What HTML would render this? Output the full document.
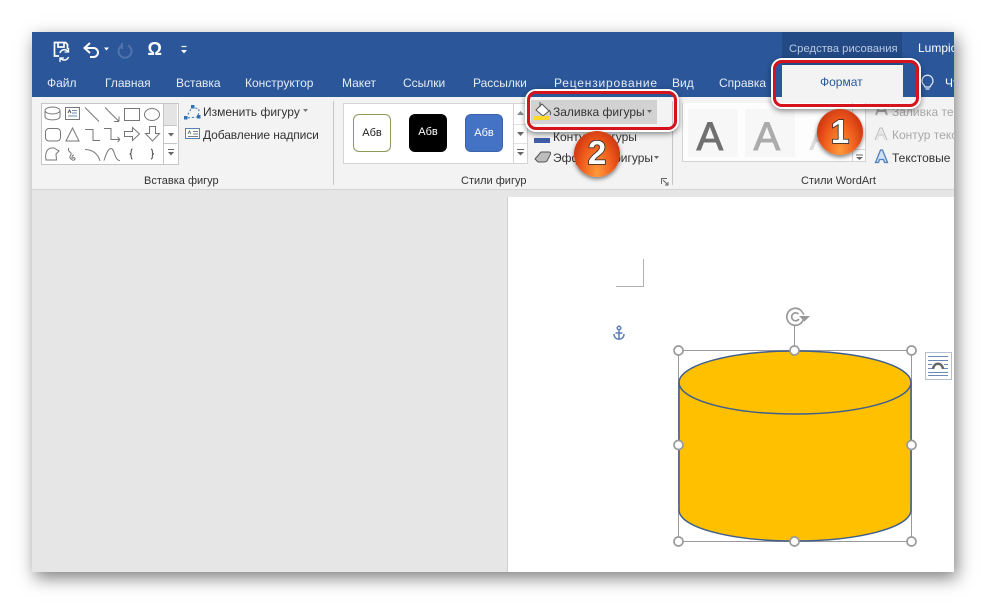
<!DOCTYPE html>
<html><head><meta charset="utf-8">
<style>
html,body{margin:0;padding:0;background:#fff}
body{width:986px;height:604px;overflow:hidden;position:relative;font-family:"Liberation Sans",sans-serif}
.a{position:absolute;white-space:nowrap}
#win{position:absolute;left:32px;top:32px;width:922px;height:540px;box-shadow:3px 6px 16px rgba(0,0,0,.5);background:#e6e6e6}
.tab{position:absolute;top:76px;color:#e6ecf5;font-size:12px;line-height:14px;white-space:nowrap}
.rb{position:absolute;font-size:12px;line-height:14px;color:#333;white-space:nowrap}
.gl{position:absolute;font-size:11px;line-height:13px;color:#333;white-space:nowrap}
.num{position:absolute;width:46px;height:46px;border-radius:50%;background:radial-gradient(ellipse at 50% 90%,#ff9a3a 0,#ee5a1c 50%,#c8300e 85%,#b52a0c 100%);box-shadow:0 2px 4px rgba(0,0,0,.5);text-align:center;font-size:33px;font-weight:700;color:#fff;-webkit-text-stroke:1.500px #222;paint-order:stroke fill}
</style></head><body>
<div id="win"></div>
<div class="a" style="left:32px;top:32px;width:922px;height:65px;background:#2b579a"></div>
<div class="a" style="left:782px;top:32px;width:120px;height:33px;background:#234a85"></div>
<div class="a" style="left:32px;top:97px;width:922px;height:92px;background:#f3f3f3;border-bottom:1px solid #d4d4d4"></div>

<svg class="a" style="left:32px;top:32px" width="200" height="34" viewBox="0 0 200 34" fill="none">
<g stroke="#fff" stroke-width="1.700"><path d="M27 24h-4.500V10.500h11l2 2V17M26 11v4h6v-4"/><path d="M28 21a4.500 4.500 0 0 1 8-1.500M36.500 25a4.500 4.500 0 0 1-8 1" stroke-width="1.500"/><path d="M36.500 16v4h-4M28 30v-4h4" stroke-width="1.300"/></g>
<path d="M53 16h8.500a4.500 4.500 0 0 1 0 9H58" stroke="#fff" stroke-width="2"/><path d="M58 11l-5.500 5 5.500 5" stroke="#fff" stroke-width="2"/>
<path d="M72 15.500h5l-2.500 3z" fill="#fff"/>
<path d="M90 13.500a6.500 6.500 0 1 0 6 0M90 11v6" stroke="#5074ab" stroke-width="2"/>
<text x="115.500" y="23" fill="#fff" font-family="Liberation Sans" font-size="18" font-weight="700">Ω</text>
<path d="M149.500 14.500h5" stroke="#fff" stroke-width="1.200"/><path d="M149 18h6l-3 3.500z" fill="#fff"/>
</svg>
<div class="a" style="left:789px;top:42px;font-size:11.300px;line-height:14px;color:#b8c8e0">Средства рисования</div>
<div class="a" style="left:918px;top:41px;width:36px;overflow:hidden;font-size:12px;line-height:14px;color:#fff">Lumpics</div>

<div class="tab" style="left:47px">Файл</div>
<div class="tab" style="left:105px">Главная</div>
<div class="tab" style="left:176px">Вставка</div>
<div class="tab" style="left:245px">Конструктор</div>
<div class="tab" style="left:342px">Макет</div>
<div class="tab" style="left:403px">Ссылки</div>
<div class="tab" style="left:473px">Рассылки</div>
<div class="tab" style="left:554px;letter-spacing:.8px">Рецензирование</div>
<div class="tab" style="left:672px">Вид</div>
<div class="tab" style="left:719px">Справка</div>
<div class="a" style="left:782px;top:65px;width:121px;height:33px;background:#f3f3f3"></div>
<div class="a" style="left:820px;top:75px;font-size:12px;line-height:14px;color:#2b579a">Формат</div>
<svg class="a" style="left:918px;top:72px" width="18" height="20" fill="none"><path d="M6 13a5.500 5.500 0 1 1 7 0l-1 2H7z M7.500 17h4" stroke="#e8eef7" stroke-width="1.200"/></svg>
<div class="a" style="left:945px;top:76px;width:9px;overflow:hidden;font-size:12px;line-height:14px;color:#fff">Что</div>

<!-- Shapes gallery -->
<div class="a" style="left:41px;top:103px;width:136px;height:60px;background:#fff;border:1px solid #c6c6c6"></div>
<div class="a" style="left:164px;top:104px;width:13px;height:21px;background:#e4e4e4"></div>
<svg class="a" style="left:0;top:0" width="200" height="170" fill="none" stroke="#777" stroke-width="1">
<path d="M163.500 103v61M164 125.500h13M164 143.500h13" stroke="#c6c6c6"/>
<ellipse cx="52.500" cy="110.500" rx="7.500" ry="3.500"/><path d="M45 110.500v6c0 4.500 15 4.500 15 0v-6"/>
<rect x="65.500" y="107.500" width="14" height="12"/><path d="M68 116h9M72 113h5M72 110.500h5" stroke="#6a8bb5"/><path d="M68 113l1.500-3 1.500 3" stroke="#555"/>
<path d="M85 107.500l14 14M105 107.500l14 14M119 121.500v-5M119 121.500h-5"/>
<rect x="124.500" y="108.500" width="15" height="12"/><ellipse cx="152" cy="114.500" rx="7.500" ry="6"/>
<rect x="45.500" y="128.500" width="15" height="12.500" rx="3.500"/><path d="M72.500 128l6.500 13H66z"/>
<path d="M85 129.500h8v11h7M104 128.500h7v11h9M120 139.500l-2.500-2.500M120 139.500l-2.500 2.500"/>
<path d="M124.500 131.500h8v-4l7 6.500-7 6.500v-4h-8z"/><path d="M149.500 126.500h6v7h4l-7 7.500-7-7.500h4z"/>
<path d="M46 160c-1-5 0-11 5-12h3l5 3-3 3 .5 6z"/>
<path d="M69 148c-2 2 1 4 2 5 1 2-2 3-1 5 1 1 3 3 4 2 2-1 1-3-1-2-2 1-1-3 1-3"/>
<path d="M85 149.500c7 0 13 4 15 11.500M104 160.500c2-6 4-12 7-12 4 0 3 12 9 12"/>
<path d="M132.500 149c-2 0-1 3-1.500 4-.3 1-1 1-1.500 1 .5 0 1.200 0 1.500 1 .5 1-.5 4 1.500 4M151 149c2 0 1 3 1.500 4 .3 1 1 1 1.500 1-.5 0-1.200 0-1.500 1-.5 1 .5 4-1.500 4" stroke="#444"/>
</svg>
<svg class="a" style="left:164px;top:125px" width="14" height="38" fill="#666"><path d="M4 8h6l-3 3.500z"/><path d="M4 24.500h6" stroke="#666"/><path d="M4 27h6l-3 3.500z"/></svg>
<svg class="a" style="left:184px;top:104px" width="18" height="36" fill="none"><path d="M2 14L8 3 15 5 14 13z" stroke="#3a6fb0" stroke-dasharray="2 2"/><g fill="#2f75b5"><rect x="0" y="12" width="3.500" height="3.500"/><rect x="7" y="1" width="3.500" height="3.500"/><rect x="13" y="11" width="3.500" height="3.500"/></g>
<rect x="1.500" y="24.500" width="14" height="10" stroke="#5b80b8" fill="#fff"/><path d="M4 30l1.500-3 1.500 3M9 27.500h5M9 30h5M4 32.500h10" stroke="#555" stroke-width=".8"/></svg>
<div class="rb" style="left:203px;top:105px">Изменить фигуру</div>
<svg class="a" style="left:303px;top:109px" width="6" height="4"><path d="M0 0h5l-2.500 3z" fill="#777"/></svg>
<div class="rb" style="left:203px;top:128px;letter-spacing:-.1px">Добавление надписи</div>
<div class="gl" style="left:144px;top:175px">Вставка фигур</div>
<div class="a" style="left:333px;top:101px;width:1px;height:84px;background:#c6c6c6"></div>

<!-- Shape styles -->
<div class="a" style="left:343px;top:103px;width:183px;height:59px;background:#fff;border:1px solid #d4d4d4"></div>
<div class="a" style="left:353px;top:114px;width:38px;height:38px;border:1px solid #8a9a5b;border-radius:6px;background:#fff;box-sizing:border-box;text-align:center;font-size:11px;line-height:36px;color:#222">Абв</div>
<div class="a" style="left:409px;top:114px;width:38px;height:38px;border-radius:6px;background:#000;text-align:center;font-size:11px;line-height:37px;color:#fff">Абв</div>
<div class="a" style="left:465px;top:114px;width:38px;height:38px;border-radius:6px;background:#4472c4;border:1px solid #3a63ab;box-sizing:border-box;text-align:center;font-size:11px;line-height:36px;color:#fff">Абв</div>
<svg class="a" style="left:513px;top:103px" width="15" height="60"><path d="M.5 0v60" stroke="#d4d4d4"/><path d="M4 12h7l-3.500-4z" fill="#888"/><path d="M4 29h7l-3.500 4z" fill="#666"/><path d="M1 21.500h13M1 40.500h13" stroke="#e2e2e2"/><path d="M4 46.500h7" stroke="#666"/><path d="M4 49h7l-3.500 3.500z" fill="#666"/></svg>

<div class="a" style="left:531px;top:100px;width:126px;height:24px;background:#d2d2d2"></div>
<svg class="a" style="left:530px;top:98px" width="24" height="70" fill="none">
<path d="M6 12l6-6 7 7-6 5z" stroke="#555" fill="#fff"/><path d="M10 4v5M19 12c2 2 2 4 1 5" stroke="#555"/>
<path d="M4 18h16v4H4z" fill="#ffd92a"/>
<path d="M4 30.500h10" stroke="#555"/>
<path d="M4 40h16v5H4z" fill="#3f5ea5"/>
<path d="M5 61l6-7h8c2 0 2 2 1 3l-3 6c-1 1-2 1-3 1H8z" fill="#bdbdbd" stroke="#555"/></svg>
<div class="rb" style="left:553px;top:105px">Заливка фигуры</div>
<svg class="a" style="left:647px;top:110px" width="6" height="4"><path d="M0 0h5l-2.500 3z" fill="#666"/></svg>
<div class="rb" style="left:553px;top:130px">Контур фигуры</div>
<div class="rb" style="left:553px;top:151px">Эффекты фигуры</div>
<svg class="a" style="left:654px;top:156px" width="6" height="4"><path d="M0 0h5l-2.500 3z" fill="#666"/></svg>
<div class="gl" style="left:461px;top:175px">Стили фигур</div>
<svg class="a" style="left:660px;top:177px" width="10" height="10" fill="none" stroke="#666"><path d="M1.500 7V1.500H7M3 3l5 5M5 8h3V5"/></svg>
<div class="a" style="left:672px;top:101px;width:1px;height:84px;background:#c6c6c6"></div>

<!-- WordArt -->
<div class="a" style="left:682px;top:103px;width:182px;height:58px;background:#fdfdfd;border:1px solid #d4d4d4;border-top:0"></div>
<div class="a" style="left:688px;top:109px;width:50px;height:48px;background:#f7f7f7"></div>
<div class="a" style="left:745px;top:109px;width:50px;height:48px;background:#f7f7f7"></div>
<svg class="a" style="left:682px;top:103px" width="160" height="58"><text x="14.500" y="47" font-family="Liberation Sans" font-size="40" fill="#707070" stroke="#707070" stroke-width=".9">A</text><text x="71.500" y="47" font-family="Liberation Sans" font-size="40" fill="#ababab" stroke="#ababab" stroke-width=".9">A</text><text x="127" y="47" font-family="Liberation Sans" font-size="40" fill="#dcdcdc">A</text></svg>
<svg class="a" style="left:852px;top:103px" width="14" height="60"><path d="M.5 0v58M1 46.500h13" stroke="#d4d4d4"/><path d="M4 52h7" stroke="#666"/><path d="M4 54h7l-3.500 3z" fill="#666"/></svg>
<svg class="a" style="left:872px;top:100px" width="20" height="66" fill="none">
<path d="M4 15l4-10h3l4 10M6 11h7" stroke="#aaa" stroke-width="2"/>
<path d="M3 40l5-12h2l5 12M6 35h6" stroke="#bbb" stroke-width="1"/><path d="M5 40l4-9 4 9" stroke="#ddd"/>
<path d="M3.500 62.500l5-12.500h2l5 12.500h-3l-1-3h-4l-1 3z" fill="#cfe0f4" stroke="#4f7fbf" stroke-width="1.300"/></svg>
<div class="rb" style="left:892px;top:105px;width:62px;overflow:hidden;color:#a8a8a8">Заливка текста</div>
<div class="rb" style="left:892px;top:128px;width:62px;overflow:hidden;color:#a8a8a8">Контур текста</div>
<div class="rb" style="left:892px;top:151px;width:62px;overflow:hidden;color:#333">Текстовые эффекты</div>
<div class="gl" style="left:801px;top:175px">Стили WordArt</div>

<!-- Document -->
<div class="a" style="left:508px;top:197px;width:446px;height:375px;background:#fff;box-shadow:-1px 0 0 #d0d0d0"></div>
<svg class="a" style="left:600px;top:250px" width="360" height="305" viewBox="0 0 360 305" fill="none">
<path d="M43.500 9v27.500H16" stroke="#b0b0b0"/>
<g stroke="#5d80b5" stroke-width="1.500"><circle cx="19" cy="78" r="1.800"/><path d="M19 80v9M15.500 83h7M14 84c0 7 10 7 10 0"/></g>
<path d="M78.500 100.500h233v191h-233z" stroke="#9a9a9a"/>
<path d="M194.500 100.500V76" stroke="#9a9a9a"/>
<path d="M79 132.500c0-17.500 52-31.500 116-31.500s116 14 116 31.500V260c0 17.500-52 31-116 31S79 277.500 79 260z" fill="#ffc000" stroke="#3f5f8f" stroke-width="1.500"/>
<path d="M79 132.500c0 17.500 52 31.500 116 31.500s116-14 116-31.500" stroke="#3f5f8f" stroke-width="1.500"/>
<g fill="#fff" stroke="#9a9a9a" stroke-width="1.700">
<circle cx="78.500" cy="100.500" r="4.500"/><circle cx="194.500" cy="100.500" r="4.500"/><circle cx="311.500" cy="100.500" r="4.500"/>
<circle cx="78.500" cy="195" r="4.500"/><circle cx="311.500" cy="195" r="4.500"/>
<circle cx="78.500" cy="291.500" r="4.500"/><circle cx="194.500" cy="291.500" r="4.500"/><circle cx="311.500" cy="291.500" r="4.500"/></g>
<path d="M201 60.500a8.500 8.500 0 1 0 2.500 8.500" stroke="#999" stroke-width="1.700"/>
<path d="M198.500 64a4 4 0 1 0 .5 5" stroke="#999" stroke-width="1.700"/>
<path d="M199 66h11l-5.500 5.500z" fill="#999"/>
<path d="M201 60.500l3 4" stroke="#999" stroke-width="1.500"/>
<rect x="325.500" y="102.500" width="26" height="27" fill="#fff" stroke="#b4c0d0"/>
<path d="M328 106.500h20M328 110.500h20M328 114.500h4M344 114.500h4M328 118.500h4M344 118.500h4M328 122.500h20M328 125.500h20" stroke="#6a8bb5"/>
<path d="M333 119c1-7 9-7 10 0" stroke="#666" stroke-width="2.500"/>
</svg>

<!-- Annotations -->
<div class="a" style="left:773px;top:60px;width:146px;height:47px;box-sizing:border-box;border:3.500px solid #d5131c;border-radius:9px;box-shadow:0 0 0 2px #fff,0 2px 6px 2px rgba(0,0,0,.45)"></div>
<div class="a" style="left:527px;top:91px;width:150px;height:39px;box-sizing:border-box;border:3px solid #d5131c;border-radius:9px;box-shadow:0 0 0 2px #fff,0 2px 6px 2px rgba(0,0,0,.45)"></div>
<div class="num" style="left:817px;top:109px;line-height:46px">1</div>
<div class="num" style="left:574px;top:131px;line-height:44px">2</div>
</body></html>
